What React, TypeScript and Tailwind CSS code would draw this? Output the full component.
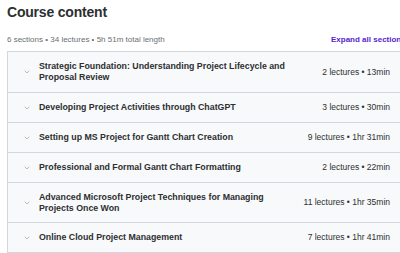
import {ChevronDown} from 'lucide-react'

const sections = [
  {title: 'Strategic Foundation: Understanding Project Lifecycle and Proposal Review', meta: '2 lectures • 13min', tall: true},
  {title: 'Developing Project Activities through ChatGPT', meta: '3 lectures • 30min'},
  {title: 'Setting up MS Project for Gantt Chart Creation', meta: '9 lectures • 1hr 31min'},
  {title: 'Professional and Formal Gantt Chart Formatting', meta: '2 lectures • 22min'},
  {title: 'Advanced Microsoft Project Techniques for Managing Projects Once Won', meta: '11 lectures • 1hr 35min', tall: true},
  {title: 'Online Cloud Project Management', meta: '7 lectures • 1hr 41min'},
]

const App = () => {
  return (
    <div className="w-[400px] h-[253px] overflow-hidden bg-white font-['Liberation_Sans',Arial,sans-serif] text-[#2d2f31]">
      <div className="pl-[7px] pt-[2px]">
        <h2 className="text-[14px] leading-[20px] font-bold tracking-[-0.2px]">Course content</h2>

        <div className="mt-[11px] h-[14px] flex flex-row items-center">
          <span className="w-[324px] shrink-0 text-[8px] text-[#6a6f73]">6 sections • 34 lectures • 5h 51m total length</span>
          <span className="text-[8px] font-bold text-[#5624d0] whitespace-nowrap">Expand all sections</span>
        </div>

        <div className="mt-[4px] w-[400px] border border-[#d1d7dc] bg-[#f7f9fa]">
          {sections.map((s, i) => (
            <div
              key={s.title}
              className={`flex flex-row items-center pl-[15px] pr-[16px] ${s.tall ? 'h-[40px]' : 'h-[30px]'} ${i > 0 ? 'border-t border-[#d1d7dc]' : ''}`}
            >
              <ChevronDown size={8} strokeWidth={1.75} className="text-[#8a8f93] mr-[8px] shrink-0" />
              <span className="w-[256px] text-[8.8px] leading-[11px] font-bold">{s.title}</span>
              <span className="ml-auto text-[8.5px] text-[#2d2f31] whitespace-nowrap">{s.meta}</span>
            </div>
          ))}
        </div>
      </div>
    </div>
  )
}

export default App
